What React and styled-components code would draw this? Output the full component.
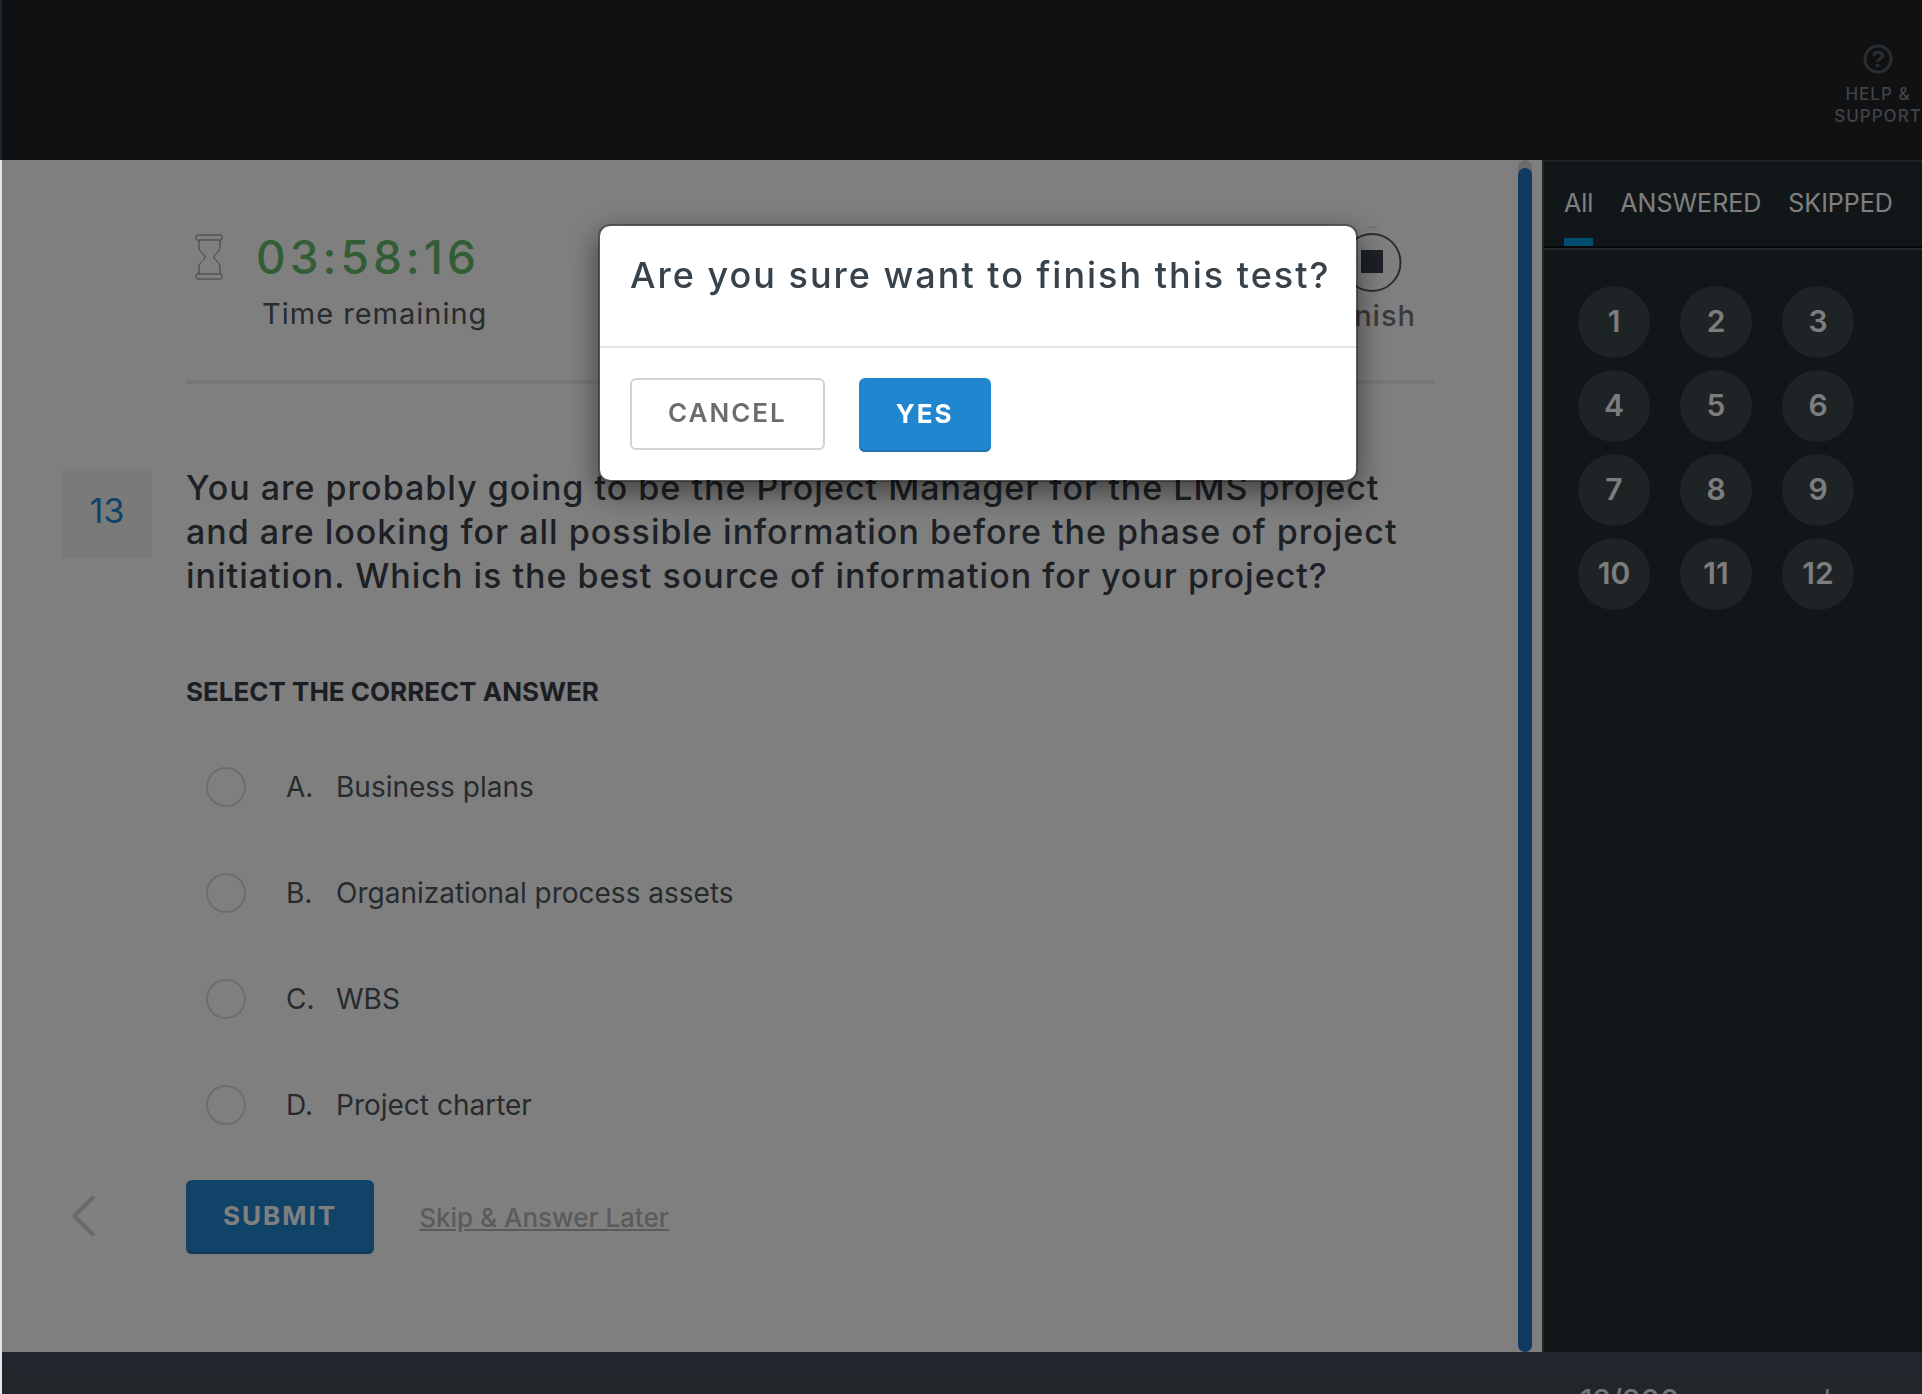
import React, { useState } from "react";
import styled, { createGlobalStyle } from "styled-components";

const GlobalStyle = createGlobalStyle`
  * {
    box-sizing: border-box;
  }
  body {
    margin: 0;
    overflow: hidden;
    font-family: Inter, "Liberation Sans", sans-serif;
    background: #e6e6e6;
  }
  button {
    font-family: inherit;
    cursor: pointer;
  }
  p, h1, h2 {
    margin: 0;
  }
`;

// page frame
const Page = styled.div`
  display: flex;
  flex-direction: column;
  height: 100vh;
`;

const Header = styled.header`
  display: flex;
  justify-content: flex-end;
  height: 160px;
  padding-top: 44px;
  border-left: 2px solid #1e252c;
  background: #202226;
`;

const HelpLink = styled.a`
  display: flex;
  flex-direction: column;
  align-items: center;
  width: 88px;
  color: #80868a;
  font-size: 17px;
  font-weight: 500;
  line-height: 22px;
  letter-spacing: 1px;
  text-align: center;
  text-decoration: none;

  svg {
    margin-bottom: 9px;
  }
`;

const Body = styled.div`
  display: flex;
  flex: 1;
  min-height: 0;
  border-left: 2px solid #e6e6e6;
`;

const Footer = styled.footer`
  display: flex;
  justify-content: flex-end;
  height: 42px;
  margin-left: 2px;
  padding-top: 28px;
  overflow: hidden;
  background: linear-gradient(#444a5c, #444c54);
`;

const Progress = styled.p`
  display: flex;
  gap: 22px;
  width: 342px;
  color: #e6e6e6;
  font-size: 28px;
  line-height: 40px;
`;

const ProgressCount = styled.strong`
  font-size: 30px;
  font-weight: 500;
`;

// question area
const Main = styled.main`
  flex: 1;
  min-width: 0;
  padding: 66px 84px 0 60px;
  background: #fff;
`;

const Status = styled.section`
  display: flex;
  justify-content: space-between;
  margin-left: 124px;
  padding: 0 18px 44px 8px;
  border-bottom: 4px solid #efefef;
`;

const Timer = styled.div`
  display: flex;
  gap: 32px;

  svg {
    margin-top: 8px;
  }
`;

const TimeLeft = styled.div`
  color: #66bb6a;
  font-size: 46px;
  font-weight: 500;
  line-height: 62px;
  letter-spacing: 4px;
`;

const Caption = styled.div`
  padding: 6px 0 0 6px;
  color: #4c565c;
  font-size: 29px;
  line-height: 40px;
  letter-spacing: 1px;
`;

const FinishButton = styled.button`
  display: flex;
  flex-direction: column;
  align-items: center;
  gap: 4px;
  padding: 0;
  border: 0;
  background: none;
  color: #757575;
  font-size: 29px;
  font-weight: 500;
  line-height: 40px;
  letter-spacing: 1px;
`;

const Question = styled.section`
  display: grid;
  grid-template-columns: 90px 1fr;
  column-gap: 34px;
  margin-top: 82px;
`;

const QuestionNumber = styled.div`
  display: flex;
  align-items: center;
  justify-content: center;
  height: 92px;
  padding-bottom: 6px;
  border-top: 2px solid #fff;
  background: #f5f5f5;
  color: #2086cf;
  font-size: 34px;
`;

const QuestionText = styled.h2`
  color: #3a4149;
  font-size: 34px;
  font-weight: 500;
  line-height: 44px;
  letter-spacing: 1px;
`;

const Answers = styled.fieldset`
  display: flex;
  flex-direction: column;
  gap: 66px;
  margin: 78px 0 0 124px;
  padding: 0;
  border: 0;
`;

const Legend = styled.legend`
  margin-bottom: 59px;
  padding: 0;
  color: #363c46;
  font-size: 26px;
  font-weight: 700;
  line-height: 32px;
`;

const Option = styled.label`
  display: flex;
  align-items: center;
  padding-left: 20px;
  color: #4c565c;
  font-size: 28px;
  line-height: 40px;
`;

const Radio = styled.input`
  width: 40px;
  height: 40px;
  margin: 0 40px 0 0;
  border: 2px solid #dadada;
  border-radius: 50%;
  appearance: none;

  &:checked {
    background: radial-gradient(#2086cf 50%, transparent 55%);
  }
`;

const Letter = styled.span`
  width: 50px;
`;

const Actions = styled.div`
  display: grid;
  grid-template-columns: 90px auto auto;
  justify-content: start;
  align-items: center;
  margin-top: 55px;
`;

const BackButton = styled.button`
  justify-self: start;
  padding: 0 0 0 8px;
  border: 0;
  background: none;
`;

const Button = styled.button`
  height: ${(props) => (props.$primary ? 74 : 72)}px;
  padding: 0 ${(props) => (props.$primary ? 37 : 36)}px 4px;
  border: ${(props) => (props.$primary ? "0" : "2px solid #d3d3d3")};
  border-radius: 6px;
  background: ${(props) => (props.$primary ? "#2086cf" : "#fff")};
  box-shadow: ${(props) => (props.$primary ? "inset 0 -2px #2572ab" : "none")};
  color: ${(props) => (props.$primary ? "#fff" : "#6c6c6c")};
  font-size: 26px;
  font-weight: ${(props) => (props.$primary ? 700 : 600)};
  letter-spacing: 2px;
`;

const SubmitButton = styled(Button)`
  margin-left: 34px;
`;

const SkipLink = styled.a`
  margin-left: 45px;
  color: #b6b6b6;
  font-size: 26px;
  font-weight: 500;
`;

const ScrollTrack = styled.div`
  width: 14px;
  padding-top: 8px;
  border-radius: 7px;
  background: #d6d6d6;
`;

const ScrollArea = styled.div`
  display: flex;
  flex: 1;
  min-width: 0;
  padding-right: 10px;
  background: #fff;
`;

const ScrollThumb = styled.div`
  height: 100%;
  border-radius: 7px;
  background: #2074c4;
`;

// right panel
const Sidebar = styled.aside`
  width: 380px;
  border: solid #3e4749;
  border-width: 2px 0 0 2px;
  background: #222c30;
`;

const Tabs = styled.nav`
  display: flex;
  gap: 27px;
  height: 86px;
  padding-left: 20px;
  border-bottom: 2px solid #0c1012;
`;

const Tab = styled.button`
  padding: 6px 0 0;
  border: solid ${(props) => (props.$active ? "#009ae0" : "transparent")};
  border-width: 0 0 8px;
  background: none;
  color: #fff;
  font-size: 25px;
`;

const Numbers = styled.div`
  display: grid;
  grid-template-columns: repeat(3, 72px);
  gap: 12px 30px;
  padding: 36px 34px;
  border-top: 2px solid #485052;
`;

const NumberButton = styled.button`
  height: 72px;
  padding: 0 0 2px;
  border: 0;
  border-radius: 50%;
  background: #3c464a;
  color: #fafafa;
  font-size: 30px;
  font-weight: 600;
`;

// dialog
const Overlay = styled.div`
  position: fixed;
  inset: 0 0 0 2px;
  display: flex;
  justify-content: center;
  align-items: flex-start;
  padding: 224px 0 0 32px;
  background: rgba(0, 0, 0, 0.5);
`;

const Dialog = styled.div`
  width: 760px;
  border: 2px solid rgba(0, 0, 0, 0.3);
  border-radius: 12px;
  background: #fff;
  background-clip: padding-box;
  box-shadow: 0 10px 30px rgba(0, 0, 0, 0.5);
`;

const DialogTitle = styled.h1`
  height: 122px;
  padding: 24px 30px;
  border-bottom: 2px solid #e5e5e5;
  color: #37424a;
  font-size: 36px;
  font-weight: 500;
  line-height: 50px;
  letter-spacing: 2px;
  white-space: nowrap;
`;

const DialogActions = styled.div`
  display: flex;
  gap: 34px;
  padding: 30px 30px 28px;
`;

const QUESTION =
  "You are probably going to be the Project Manager for the LMS project and are looking for all possible information before the phase of project initiation. Which is the best source of information for your project?";

const OPTIONS = [
  { letter: "A", text: "Business plans" },
  { letter: "B", text: "Organizational process assets" },
  { letter: "C", text: "WBS" },
  { letter: "D", text: "Project charter" },
];

const TABS = ["All", "ANSWERED", "SKIPPED"];

function HelpIcon() {
  return (
    <svg width="30" height="30" viewBox="0 0 30 30" fill="none" stroke="#565c60">
      <circle cx="15" cy="15" r="13" strokeWidth="3" />
      <path d="M10.5 11.5c.4-2 2-3.2 4.4-3.2 2.8 0 4.6 1.3 4.6 3.5 0 3.200-4.900 2.700-4.900 6.200" strokeWidth="3" />
      <path d="M14.5 20v3" strokeWidth="3" />
    </svg>
  );
}

function HourglassIcon() {
  return (
    <svg width="30" height="46" viewBox="0 0 30 46" fill="none" stroke="#7c7c7c">
      <rect x="2" y="1" width="26" height="5" rx="1.5" />
      <rect x="2" y="40" width="26" height="5" rx="1.5" />
      <path d="M5 6v7c0 5 6 7 6 10s-6 5-6 10v7M26 6v7c0 5-6 7-6 10s6 5 6 10v7" />
    </svg>
  );
}

function StopIcon() {
  return (
    <svg width="60" height="66" viewBox="0 0 60 66" fill="none">
      <path d="M25 1.5q5-1 10 0" stroke="#d0d0d0" />
      <circle cx="30" cy="36.5" r="28.5" stroke="#565c62" strokeWidth="2" />
      <rect x="19" y="24" width="22" height="23" fill="#3a4149" />
    </svg>
  );
}

function ChevronIcon() {
  return (
    <svg width="28" height="44" viewBox="0 0 28 44" fill="none" stroke="#d2d2d2">
      <path d="M24 2.5 4 22l20 19.5" strokeWidth="4" />
    </svg>
  );
}

function ConfirmDialog({ onClose }) {
  return (
    <Overlay>
      <Dialog role="dialog" aria-labelledby="dialog-title">
        <DialogTitle id="dialog-title">Are you sure want to finish this test?</DialogTitle>
        <DialogActions>
          <Button onClick={onClose}>CANCEL</Button>
          <Button $primary onClick={onClose}>YES</Button>
        </DialogActions>
      </Dialog>
    </Overlay>
  );
}

function App() {
  const [tab, setTab] = useState("All");
  const [answer, setAnswer] = useState(null);
  const [dialogOpen, setDialogOpen] = useState(true);

  return (
    <Page>
      <GlobalStyle />
      <Header>
        <HelpLink href="#help">
          <HelpIcon />
          HELP &amp; SUPPORT
        </HelpLink>
      </Header>
      <Body>
        <ScrollArea>
          <Main>
            <Status>
              <Timer>
                <HourglassIcon />
                <div>
                  <TimeLeft>03:58:16</TimeLeft>
                  <Caption>Time remaining</Caption>
                </div>
              </Timer>
              <FinishButton onClick={() => setDialogOpen(true)}>
                <StopIcon />
                Finish
              </FinishButton>
            </Status>
            <Question>
              <QuestionNumber>13</QuestionNumber>
              <QuestionText>{QUESTION}</QuestionText>
            </Question>
            <Answers>
              <Legend>SELECT THE CORRECT ANSWER</Legend>
              {OPTIONS.map((option) => (
                <Option key={option.letter}>
                  <Radio
                    type="radio"
                    name="answer"
                    checked={answer === option.letter}
                    onChange={() => setAnswer(option.letter)}
                  />
                  <Letter>{option.letter}.</Letter>
                  {option.text}
                </Option>
              ))}
            </Answers>
            <Actions>
              <BackButton aria-label="Previous question">
                <ChevronIcon />
              </BackButton>
              <SubmitButton $primary>SUBMIT</SubmitButton>
              <SkipLink href="#skip">Skip &amp; Answer Later</SkipLink>
            </Actions>
          </Main>
          <ScrollTrack>
            <ScrollThumb />
          </ScrollTrack>
        </ScrollArea>
        <Sidebar>
          <Tabs>
            {TABS.map((name) => (
              <Tab key={name} $active={tab === name} onClick={() => setTab(name)}>
                {name}
              </Tab>
            ))}
          </Tabs>
          <Numbers>
            {Array.from({ length: 12 }, (_, i) => (
              <NumberButton key={i}>{i + 1}</NumberButton>
            ))}
          </Numbers>
        </Sidebar>
      </Body>
      <Footer>
        <Progress>
          <ProgressCount>12/200</ProgressCount>
          answered
        </Progress>
      </Footer>
      {dialogOpen && <ConfirmDialog onClose={() => setDialogOpen(false)} />}
    </Page>
  );
}

export default App;
